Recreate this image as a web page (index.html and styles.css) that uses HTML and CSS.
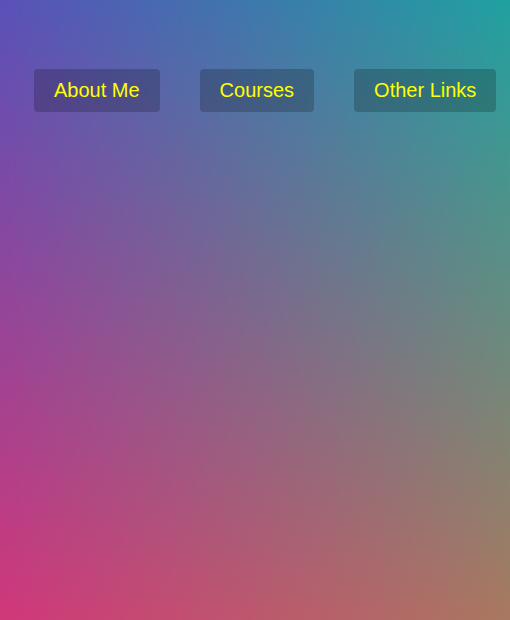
FILE: index.html
```html
<!DOCTYPE html>
<html lang="en">
<head>
<meta charset="utf-8">
<title>Home</title>
<link rel="stylesheet" href="styles.css">
</head>
<body>
<div class="bg"></div>
<nav class="nav">
  <a class="nav-btn" href="#">About Me</a>
  <a class="nav-btn" href="#">Courses</a>
  <a class="nav-btn" href="#">Other Links</a>
</nav>
</body>
</html>
```
FILE: styles.css
```css
html, body {
  margin: 0;
  height: 100%;
}
body {
  position: relative;
  min-height: 620px;
  font-family: "Liberation Sans", Arial, sans-serif;
  background: linear-gradient(to bottom, #5a51b9, #d1387a);
  overflow: hidden;
}
.bg {
  position: absolute;
  inset: 0;
  background: linear-gradient(to bottom, #20a1a0, #a97860);
  -webkit-mask-image: linear-gradient(to right, transparent, #000);
  mask-image: linear-gradient(to right, transparent, #000);
}
.nav {
  position: relative;
  display: flex;
  gap: 40px;
  padding: 69px 0 0 34px;
}
.nav-btn {
  display: block;
  padding: 10px 20px;
  font-size: 20px;
  line-height: 23px;
  color: #ffff00;
  text-decoration: none;
  background: rgba(0, 0, 0, 0.2);
  border-radius: 4px;
}
```
